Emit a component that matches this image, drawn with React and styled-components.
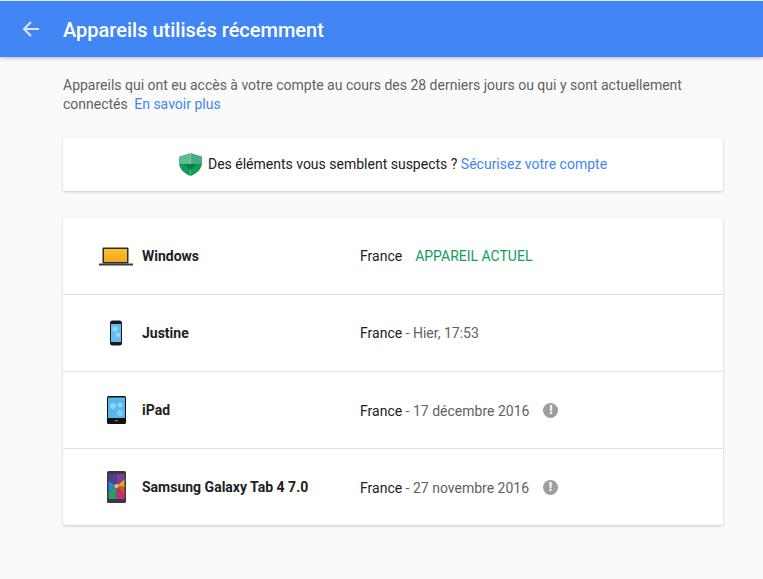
import React from "react";
import styled, { createGlobalStyle } from "styled-components";

const GlobalStyle = createGlobalStyle`
    html, body {
        margin: 0;
        padding: 0;
        background: #fafafa;
        font-family: Roboto, "Liberation Sans", sans-serif;
    }
`;

const Page = styled.div`
    height: 579px;
    overflow: hidden;
    background: #fafafa;
`;

const Header = styled.header`
    height: 56px;
    margin-top: 1px;
    display: flex;
    align-items: center;
    background: #4285f4;
    box-shadow: 0 1px 4px rgba(0, 0, 0, 0.28);
`;

const BackButton = styled.div`
    width: 63px;
    box-sizing: border-box;
    padding-right: 1px;
    display: flex;
    justify-content: center;
    svg {
        display: block;
    }
`;

const Title = styled.h1`
    margin: 0;
    padding-top: 1px;
    font-size: 20px;
    font-weight: 500;
    color: #fff;
`;

const Content = styled.main`
    width: 660px;
    margin-left: 63px;
`;

const Intro = styled.p`
    margin: 19px 0 0;
    font-size: 14px;
    line-height: 19px;
    color: #616161;
`;

const Link = styled.a`
    color: #4285f4;
    margin-left: ${(p) => p.$gap || 0}px;
`;

const Card = styled.section`
    background: #fff;
    border-radius: 2px;
    box-shadow: 0 1px 3px rgba(0, 0, 0, 0.2);
`;

const Notice = styled(Card)`
    margin-top: 24px;
    height: 53px;
    display: flex;
    align-items: center;
    justify-content: center;
    gap: 6px;
    font-size: 14px;
    color: #212121;
    svg {
        display: block;
    }
    span {
        margin-top: -2px;
    }
`;

const DeviceList = styled(Card)`
    margin-top: 27px;
`;

const Row = styled.div`
    height: 76px;
    display: flex;
    align-items: center;
    border-top: ${(p) => (p.$first ? "none" : "1px solid #e0e0e0")};
`;

const IconCell = styled.div`
    width: 79px;
    padding-left: 27px;
    box-sizing: border-box;
    display: flex;
    justify-content: center;
    svg {
        display: block;
    }
`;

const DeviceName = styled.div`
    width: 218px;
    font-size: 14px;
    font-weight: 700;
    color: #212121;
`;

const Place = styled.div`
    display: flex;
    align-items: center;
    font-size: 14px;
    color: #212121;
    padding-top: ${(p) => (p.$alert ? 1 : 0)}px;
`;

const When = styled.span`
    color: #616161;
    white-space: pre;
`;

const Current = styled.span`
    margin-left: 13px;
    color: #0f9d58;
`;

const AlertDot = styled.span`
    width: 15px;
    height: 15px;
    margin: -1px 0 0 14px;
    border-radius: 50%;
    background: #9e9e9e;
    color: #fff;
    font-size: 12px;
    font-weight: 900;
    line-height: 15px;
    text-align: center;
`;

const ArrowIcon = () => (
    <svg width="24" height="24" viewBox="0 0 24 24" fill="none" stroke="#d9e6fd" strokeWidth="2">
        <path d="M20 12H5M12 5l-7 7 7 7" />
    </svg>
);

const ShieldIcon = () => (
    <svg width="23" height="23" viewBox="0 0 23 23">
        <path d="M11.500 0 L23 3.500 V11 H11.500 Z" fill="#46ad7c" />
        <path d="M11.500 0 L0 3.500 V11 H11.500 Z" fill="#5fbb90" />
        <path d="M0 11 H11.500 V23 C5 20.500 1 16.500 0 11 Z" fill="#0f9d58" />
        <path d="M23 11 H11.500 V23 C18 20.500 22 16.500 23 11 Z" fill="#0f9d58" />
        <path d="M5 11 H18 L11.500 17 Z" fill="#0b8043" />
    </svg>
);

const LaptopIcon = () => (
    <svg width="34" height="19" viewBox="0 0 34 19">
        <defs>
            <linearGradient id="laptopScreen" x1="0" y1="0" x2="0" y2="1">
                <stop offset="0" stopColor="#fbc02d" />
                <stop offset="1" stopColor="#f5a623" />
            </linearGradient>
        </defs>
        <rect x="3.500" y="0.500" width="26" height="16" fill="#2b2b2b" rx="1" />
        <rect x="5" y="2" width="23" height="13" fill="url(#laptopScreen)" />
        <rect x="0" y="16.500" width="34" height="2" fill="#3a3a3a" />
    </svg>
);

const PhoneIcon = () => (
    <svg width="14" height="26" viewBox="0 0 14 26">
        <rect x="1" y="0.500" width="12" height="25" rx="2.500" fill="#1b1b1b" />
        <rect x="2" y="4" width="10" height="18" fill="#62bdf0" />
        <circle cx="6" cy="9" r="2.500" fill="#9fd8f5" />
        <circle cx="9" cy="15" r="2" fill="#9fd8f5" />
    </svg>
);

const TabletIcon = () => (
    <svg width="19" height="28" viewBox="0 0 19 28">
        <rect x="0" y="0" width="19" height="28" rx="1.500" fill="#111" />
        <rect x="1" y="1.500" width="17" height="20.500" fill="#58b7e8" />
        <circle cx="6" cy="10" r="3" fill="#93d3f4" />
        <circle cx="13" cy="9" r="2.500" fill="#93d3f4" />
        <circle cx="13" cy="17" r="3" fill="#84cdf2" />
        <rect x="8" y="24" width="3" height="1.500" fill="#666" />
    </svg>
);

const GalaxyIcon = () => (
    <svg width="19" height="32" viewBox="0 0 19 32">
        <rect x="0" y="0" width="19" height="32" rx="1.500" fill="#3a3a3a" />
        <rect x="1.500" y="3" width="16" height="25" fill="#4a3080" />
        <path d="M1.500 3 H9.500 V15 L1.500 10 Z" fill="#4c3f8f" />
        <path d="M9.500 15 L17.500 8 V16 Z" fill="#eaa31f" />
        <path d="M9.500 15 L17.500 16 V24 Z" fill="#dc4b32" />
        <path d="M9.500 15 L17.500 24 V28 H9.500 Z" fill="#c42c7c" />
        <path d="M9.500 15 V28 H1.500 V22 Z" fill="#2f9e5d" />
        <path d="M9.500 15 L1.500 10 V22 Z" fill="#2a86c8" />
        <path d="M9.500 15 V3 H17.500 V8 Z" fill="#7b3f98" />
        <circle cx="9.500" cy="15" r="2" fill="#f4c84a" />
    </svg>
);

const devices = [
    { name: "Windows", icon: <LaptopIcon />, current: true },
    { name: "Justine", icon: <PhoneIcon />, when: "Hier, 17:53" },
    { name: "iPad", icon: <TabletIcon />, when: "17 décembre 2016", alert: true },
    { name: "Samsung Galaxy Tab 4 7.0", icon: <GalaxyIcon />, when: "27 novembre 2016", alert: true },
];

export default function App() {
    return (
        <Page>
            <GlobalStyle />
            <Header>
                <BackButton>
                    <ArrowIcon />
                </BackButton>
                <Title>Appareils utilisés récemment</Title>
            </Header>
            <Content>
                <Intro>
                    Appareils qui ont eu accès à votre compte au cours des 28 derniers jours ou qui y sont actuellement
                    connectés <Link $gap={3}>En savoir plus</Link>
                </Intro>
                <Notice>
                    <ShieldIcon />
                    <span>
                        Des éléments vous semblent suspects ? <Link>Sécurisez votre compte</Link>
                    </span>
                </Notice>
                <DeviceList>
                    {devices.map((d, i) => (
                        <Row key={d.name} $first={i === 0}>
                            <IconCell>{d.icon}</IconCell>
                            <DeviceName>{d.name}</DeviceName>
                            <Place $alert={d.alert}>
                                France
                                {d.when && <When> - {d.when}</When>}
                                {d.current && <Current>APPAREIL ACTUEL</Current>}
                                {d.alert && <AlertDot>!</AlertDot>}
                            </Place>
                        </Row>
                    ))}
                </DeviceList>
            </Content>
        </Page>
    );
}
